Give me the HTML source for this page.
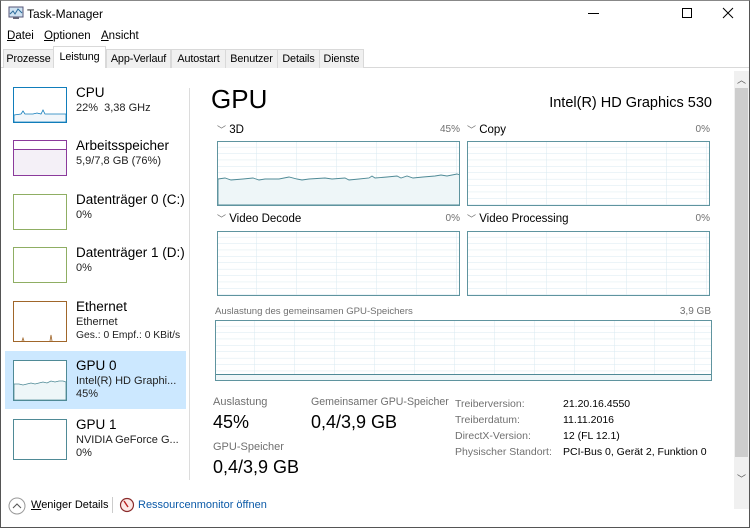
<!DOCTYPE html>
<html><head><meta charset="utf-8">
<style>
*{margin:0;padding:0;box-sizing:border-box}
body{width:750px;height:528px;overflow:hidden;background:#fff;font-family:"Liberation Sans",sans-serif;color:#000;position:relative}
.a{position:absolute;white-space:nowrap}
.win{position:absolute;left:0;top:0;width:750px;height:528px;border:1px solid #555;border-top-color:#888}
.tab{position:absolute;top:49px;height:19px;font-size:10.8px;padding-top:3px;text-align:center;border:1px solid #d9d9d9;border-bottom:none;background:#f0f0f0;letter-spacing:-0.1px}
.g{color:#707070}
.thumb{position:absolute;left:13px;width:54px;height:36px;background:#fff}
.lt{font-size:13.5px}
.ls{font-size:11px;color:#222}
.lbl{font-size:11.5px}
.tbl{font-size:10.5px}
</style></head><body>
<svg width="0" height="0" style="position:absolute">
<defs>
<pattern id="gp" width="40" height="6.4" patternUnits="userSpaceOnUse" x="0" y="0">
<path d="M0 6.4H40M40 0V6.4" stroke="#d9eaf0" stroke-width="1" fill="none"/>
</pattern>
</defs></svg>
<div class="win"></div>
<svg class="a" style="left:8px;top:6px" width="16" height="14" viewBox="0 0 16 14"><rect x="1" y="1" width="14" height="10" fill="#cfe3f2" stroke="#557" stroke-width="1"/><path d="M2 8L5 5L7 8L10 3L14 7" stroke="#2a6a9a" fill="none"/><rect x="5" y="11" width="6" height="2" fill="#667"/></svg>
<div class="a" style="left:27px;top:7px;font-size:12px">Task-Manager</div>
<div class="a" style="left:588px;top:13px;width:11px;height:1px;background:#000"></div>
<div class="a" style="left:682px;top:8px;width:10px;height:10px;border:1px solid #000"></div>
<svg class="a" style="left:722px;top:7px" width="12" height="12"><path d="M1 1L11 11M11 1L1 11" stroke="#000" stroke-width="1"/></svg>
<div class="a" style="left:7px;top:30px;font-size:11.5px"><u>D</u>atei</div>
<div class="a" style="left:44px;top:30px;font-size:11.5px"><u>O</u>ptionen</div>
<div class="a" style="left:101px;top:30px;font-size:11.5px"><u>A</u>nsicht</div>
<div class="a" style="left:1px;top:67px;width:748px;height:1px;background:#d9d9d9"></div>
<div class="tab" style="left:3px;width:51px">Prozesse</div>
<div class="tab" style="left:53px;width:53px;top:46px;height:22px;background:#fff;padding-top:4px">Leistung</div>
<div class="tab" style="left:106px;width:65px">App-Verlauf</div>
<div class="tab" style="left:171px;width:55px">Autostart</div>
<div class="tab" style="left:225px;width:53px">Benutzer</div>
<div class="tab" style="left:277px;width:43px">Details</div>
<div class="tab" style="left:319px;width:45px">Dienste</div>
<div class="a" style="left:189px;top:88px;width:1px;height:392px;background:#dcdcdc"></div>
<div class="a" style="left:5px;top:351px;width:181px;height:58px;background:#cce8ff"></div>

<svg class="thumb" style="top:87px" width="54" height="36"><rect x="0.5" y="0.5" width="53" height="35" fill="#fff" stroke="#117dbb"/><path d="M1 28L8 27L10 24L12 27L20 27L24 26L28 27L30 23L32 27L45 27L53 27V35H1Z" fill="#f1f6fa" stroke="#117dbb" stroke-width=".8"/></svg>
<div class="a lt" style="left:76px;top:85px">CPU</div>
<div class="a ls" style="left:76px;top:102px">22%&nbsp; 3,38 GHz</div>

<svg class="thumb" style="top:140px" width="54" height="36"><rect x="0.5" y="0.5" width="53" height="35" fill="#f4f0f7" stroke="#8b3a9b"/><rect x="1" y="1" width="52" height="8" fill="#fff"/><path d="M1 9.5H53" stroke="#8b3a9b"/></svg>
<div class="a lt" style="left:76px;top:138px">Arbeitsspeicher</div>
<div class="a ls" style="left:76px;top:155px">5,9/7,8 GB (76%)</div>

<svg class="thumb" style="top:194px" width="54" height="36"><rect x="0.5" y="0.5" width="53" height="35" fill="#fff" stroke="#8fae63"/></svg>
<div class="a lt" style="left:76px;top:192px">Datenträger 0 (C:)</div>
<div class="a ls" style="left:76px;top:209px">0%</div>

<svg class="thumb" style="top:247px" width="54" height="36"><rect x="0.5" y="0.5" width="53" height="35" fill="#fff" stroke="#8fae63"/></svg>
<div class="a lt" style="left:76px;top:245px">Datenträger 1 (D:)</div>
<div class="a ls" style="left:76px;top:262px">0%</div>

<svg class="thumb" style="top:301px;height:41px" width="54" height="41"><rect x="0.5" y="0.5" width="53" height="40" fill="#fff" stroke="#a0662a"/><path d="M9 40L10 37L11 40M37 40L38 34L39 40" stroke="#a0662a" fill="none" stroke-width=".8"/></svg>
<div class="a lt" style="left:76px;top:299px">Ethernet</div>
<div class="a ls" style="left:76px;top:316px">Ethernet</div>
<div class="a ls g" style="left:76px;top:330px;font-size:10.3px">Ges.: <span style="color:#222">0</span> Empf.: <span style="color:#222">0 KBit/s</span></div>

<svg class="thumb" style="top:360px;height:41px" width="54" height="41"><rect x="0.5" y="0.5" width="53" height="40" fill="#fff" stroke="#4f8a96"/><path d="M1 24L6 24L10 25L14 24L18 23L22 24L26 23L30 22L34 23L38 21L42 22L46 21L50 21L53 22V40H1Z" fill="#eef6f8" stroke="#4f8a96" stroke-width=".8"/></svg>
<div class="a lt" style="left:76px;top:358px">GPU 0</div>
<div class="a ls" style="left:76px;top:375px">Intel(R) HD Graphi...</div>
<div class="a ls" style="left:76px;top:388px">45%</div>

<svg class="thumb" style="top:419px;height:41px" width="54" height="41"><rect x="0.5" y="0.5" width="53" height="40" fill="#fff" stroke="#4f8a96"/></svg>
<div class="a lt" style="left:76px;top:417px">GPU 1</div>
<div class="a ls" style="left:76px;top:434px">NVIDIA GeForce G...</div>
<div class="a ls" style="left:76px;top:447px">0%</div>

<div class="a" style="left:211px;top:84px;font-size:26px">GPU</div>
<div class="a" style="right:38px;top:95px;font-size:14.5px">Intel(R) HD Graphics 530</div>

<div class="a lbl" style="left:217px;top:123px"><span class="g" style="font-size:9px">﹀</span> 3D</div>
<div class="a g" style="left:430px;top:124px;font-size:10px;width:30px;text-align:right">45%</div>
<div class="a lbl" style="left:467px;top:123px"><span class="g" style="font-size:9px">﹀</span> Copy</div>
<div class="a g" style="left:680px;top:124px;font-size:10px;width:30px;text-align:right">0%</div>
<div class="a lbl" style="left:217px;top:212px"><span class="g" style="font-size:9px">﹀</span> Video Decode</div>
<div class="a g" style="left:430px;top:213px;font-size:10px;width:30px;text-align:right">0%</div>
<div class="a lbl" style="left:467px;top:212px"><span class="g" style="font-size:9px">﹀</span> Video Processing</div>
<div class="a g" style="left:680px;top:213px;font-size:10px;width:30px;text-align:right">0%</div>

<svg class="a" style="left:217px;top:141px" width="243" height="65"><rect width="243" height="65" fill="url(#gp)"/><path d="M1 38L8 37L14 39L26 38L36 37L42 39L48 38L62 38L72 36L80 38L85 39L92 38L108 37L115 38L128 37L132 39L142 38L152 37L155 35L158 37L170 36L180 35L184 37L190 35L196 37L206 36L218 35L224 34L230 35L240 33L243 34V64H1Z" fill="#eef6f8" stroke="#4f8a96" stroke-width=".9"/><rect x="0.5" y="0.5" width="242" height="64" fill="none" stroke="#5f949f"/></svg>
<svg class="a" style="left:467px;top:141px" width="243" height="65"><rect width="243" height="65" fill="url(#gp)"/><rect x="0.5" y="0.5" width="242" height="64" fill="none" stroke="#5f949f"/></svg>
<svg class="a" style="left:217px;top:231px" width="243" height="65"><rect width="243" height="65" fill="url(#gp)"/><rect x="0.5" y="0.5" width="242" height="64" fill="none" stroke="#5f949f"/></svg>
<svg class="a" style="left:467px;top:231px" width="243" height="65"><rect width="243" height="65" fill="url(#gp)"/><rect x="0.5" y="0.5" width="242" height="64" fill="none" stroke="#5f949f"/></svg>

<div class="a g" style="left:215px;top:306px;font-size:9.6px">Auslastung des gemeinsamen GPU-Speichers</div>
<div class="a g" style="left:670px;top:306px;font-size:10px;width:41px;text-align:right">3,9 GB</div>
<svg class="a" style="left:215px;top:320px" width="497" height="61"><rect width="497" height="61" fill="url(#gp)"/><rect x="1" y="54" width="495" height="6" fill="#eef6f8"/><path d="M1 54.5H496" stroke="#4f8a96"/><rect x="0.5" y="0.5" width="496" height="60" fill="none" stroke="#5f949f"/></svg>

<div class="a lbl g" style="left:213px;top:396px;font-size:11px">Auslastung</div>
<div class="a" style="left:213px;top:412px;font-size:18px">45%</div>
<div class="a lbl g" style="left:311px;top:396px;font-size:10.6px">Gemeinsamer GPU-Speicher</div>
<div class="a" style="left:311px;top:412px;font-size:18px">0,4/3,9 GB</div>
<div class="a lbl g" style="left:213px;top:441px;font-size:11px">GPU-Speicher</div>
<div class="a" style="left:213px;top:457px;font-size:18px">0,4/3,9 GB</div>

<div class="a tbl g" style="left:455px;top:396px;line-height:16px">Treiberversion:<br>Treiberdatum:<br>DirectX-Version:<br>Physischer Standort:</div>
<div class="a tbl" style="left:563px;top:396px;line-height:16px">21.20.16.4550<br>11.11.2016<br>12 (FL 12.1)<br>PCI-Bus 0, Gerät 2, Funktion 0</div>

<div class="a" style="left:734px;top:71px;width:15px;height:438px;background:#f0f0f0"></div>
<div class="a" style="left:735px;top:88px;width:13px;height:369px;background:#cdcdcd"></div>
<div class="a" style="left:737px;top:73px;font-size:9px;color:#555">︿</div>
<div class="a" style="left:737px;top:472px;font-size:9px;color:#555">﹀</div>

<svg class="a" style="left:8px;top:497px" width="18" height="18"><circle cx="9" cy="9" r="8" fill="#fff" stroke="#999"/><path d="M5 11L9 7L13 11" stroke="#555" fill="none"/></svg>
<div class="a" style="left:31px;top:499px;font-size:11px"><u>W</u>eniger Details</div>
<div class="a" style="left:112px;top:497px;width:1px;height:16px;background:#ccc"></div>
<svg class="a" style="left:119px;top:497px" width="16" height="16"><circle cx="8" cy="8" r="6.5" fill="#fde9e6" stroke="#8a2b2b" stroke-width="1.2"/><path d="M5 4L9 10" stroke="#b22" stroke-width="1.4"/></svg>
<div class="a" style="left:138px;top:499px;font-size:11px;color:#0b5aa8">Ressourcenmonitor öffnen</div>
</body></html>
